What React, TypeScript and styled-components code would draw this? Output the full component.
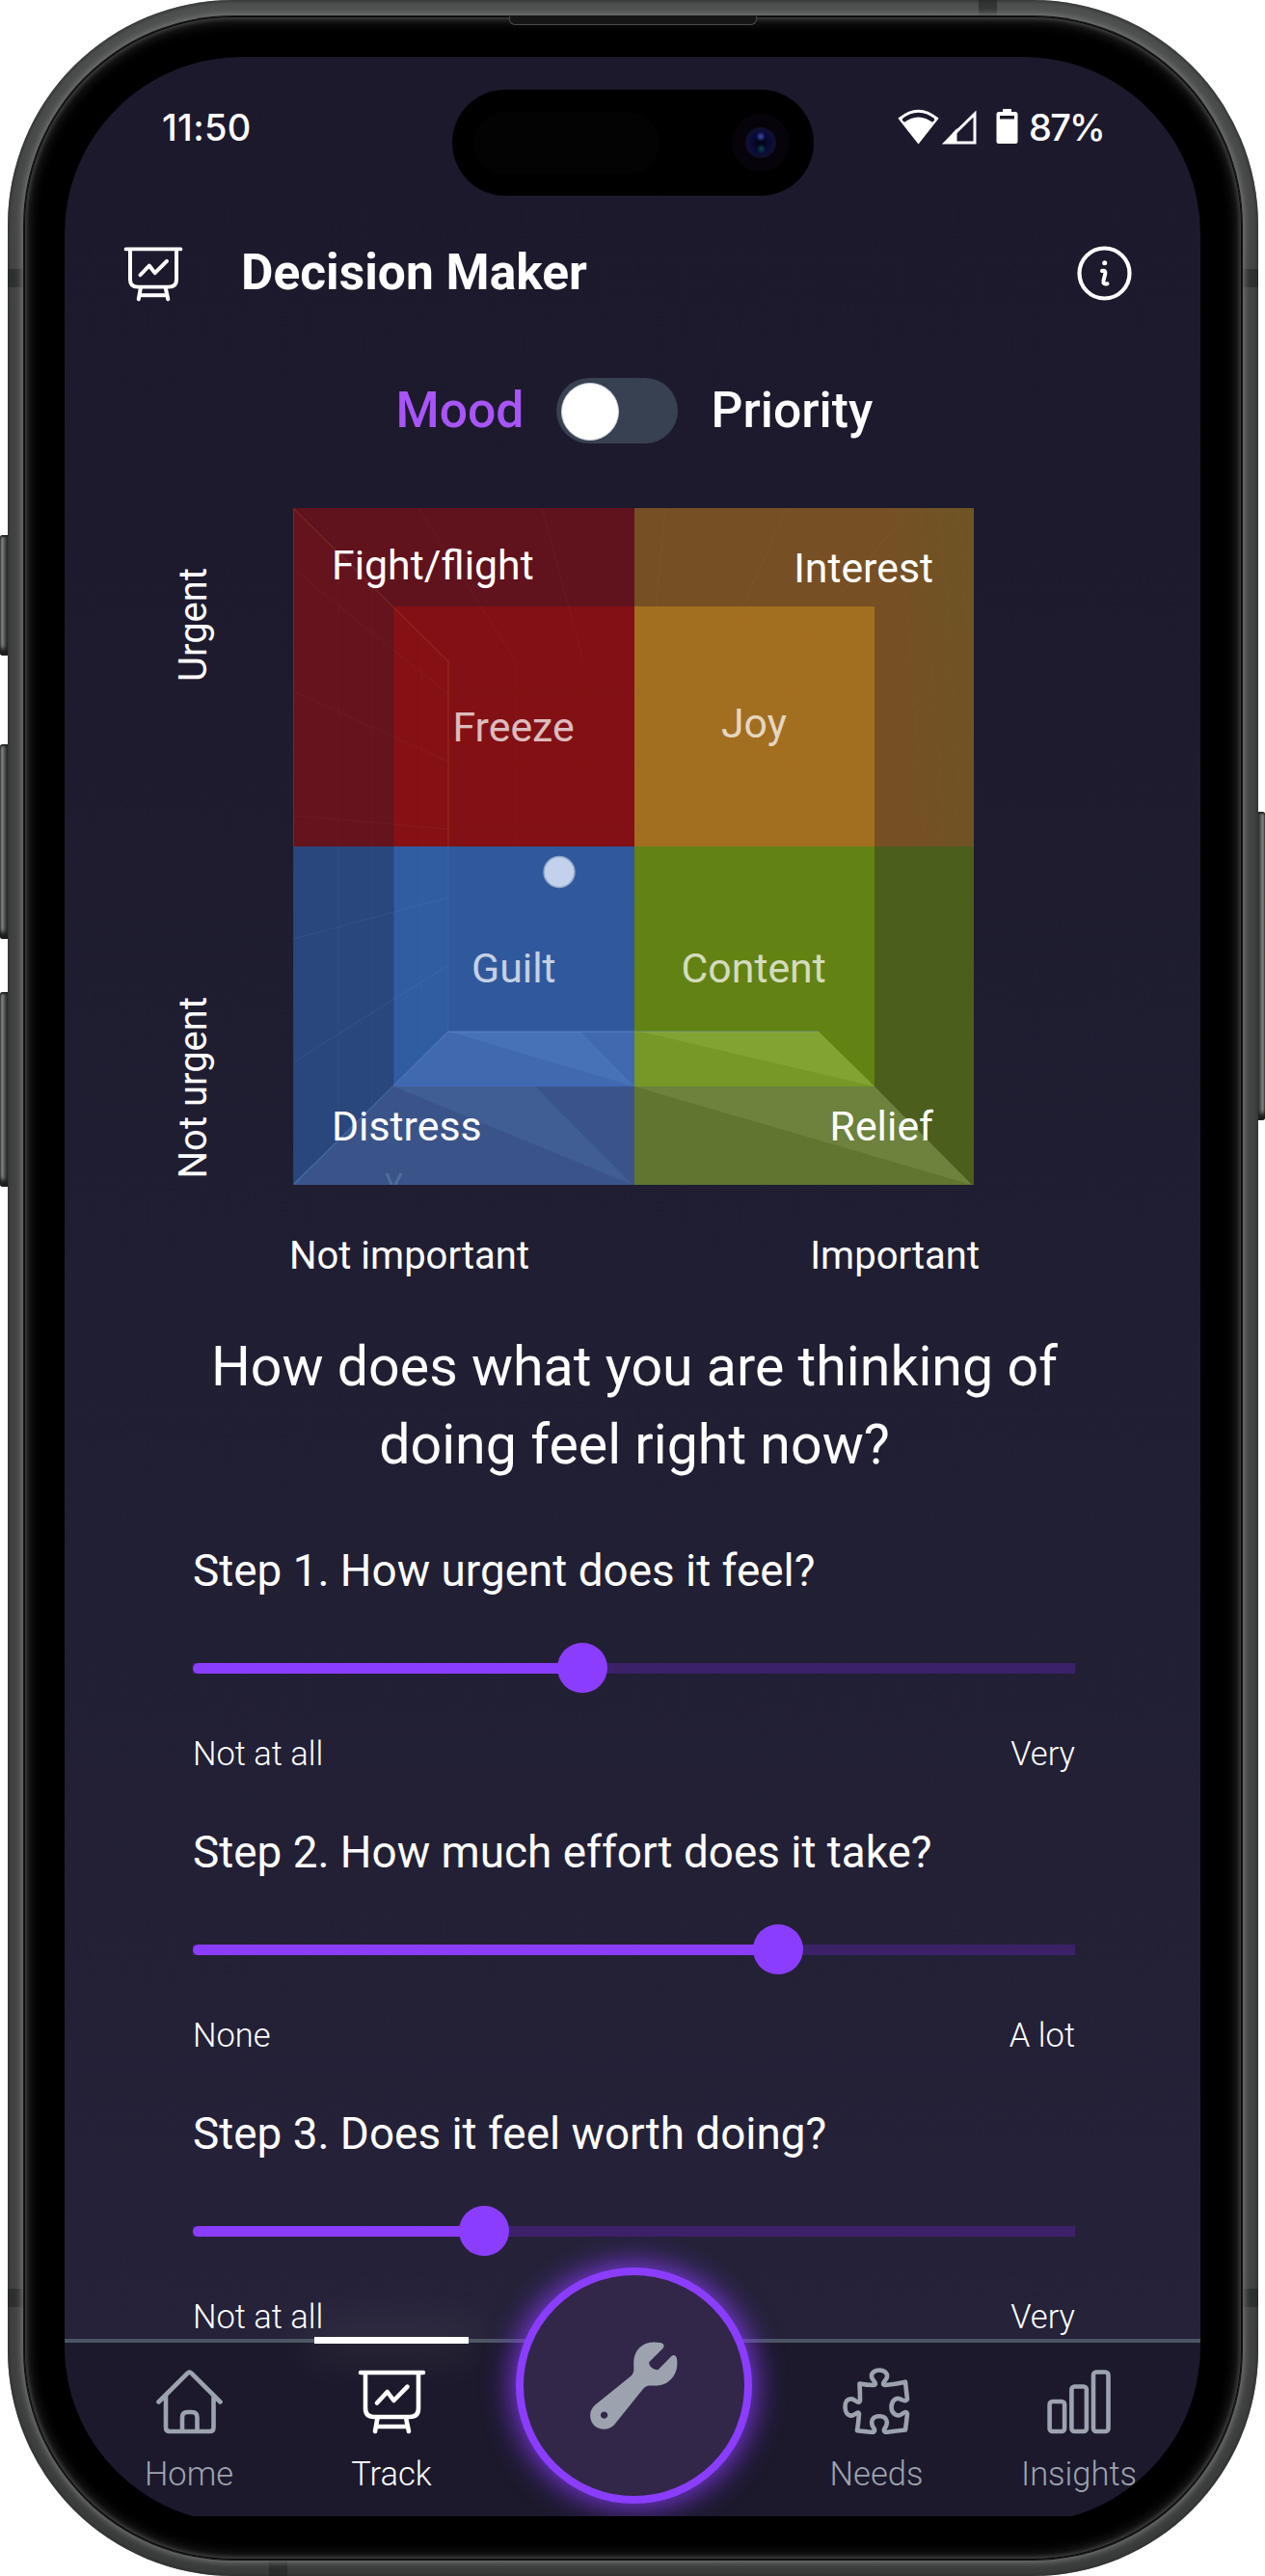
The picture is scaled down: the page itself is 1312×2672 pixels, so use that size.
import React from "react";
import styled, { createGlobalStyle, css } from "styled-components";

const Global = createGlobalStyle`
  * { box-sizing: border-box; }
  body { margin: 0; background: #fff; font-family: Roboto, "Liberation Sans", sans-serif; color: #fff; }
  svg { display: block; }
`;

/* ---------- device shell ---------- */

const Stage = styled.div`
  position: relative;
  width: 1312px;
  height: 2672px;
  padding: 0 7px 0 8px;
  overflow: hidden;
`;

const SideButton = styled.i<{ $side: "left" | "right"; $top: number; $height: number }>`
  position: absolute;
  ${(p) => p.$side}: 0;
  top: ${(p) => p.$top}px;
  width: 10px;
  height: ${(p) => p.$height}px;
  border-radius: 3px;
  background: linear-gradient(to ${(p) => p.$side}, #2b2c2c 30%, #58595a 55%, #858688 80%, #3a3b3b);
  box-shadow: inset 0 3px 2px -1px #222, inset 0 -9px 4px -2px #1c1c1c;
`;

const Body = styled.div`
  position: relative;
  height: 2672px;
  padding: 17px;
  border-radius: 234px;
  background: linear-gradient(#4e514f, #424443 12%, #424443 88%, #3a3c3b);
  box-shadow: inset 0 0 4px 1px #2b2d2c;
`;

const Seam = styled.i<{ $x?: "left" | "right"; $y?: "top" | "bottom"; $at: number }>`
  position: absolute;
  background: rgba(30, 32, 31, 0.55);
  ${(p) =>
    p.$x
      ? css`${p.$x}: 0; top: ${p.$at}px; width: 16px; height: 19px;`
      : css`${p.$y}: 0; left: ${p.$at}px; width: 19px; height: 16px;`}
`;

const Bezel = styled.div`
  position: relative;
  height: 2638px;
  padding: 42px 43px 45px 42px;
  border-radius: 217px;
  background: #000;
  box-shadow: 0 0 0 1px #141414, 0 0 6px 3px #747675, inset 0 0 0 1px #090909, inset 0 0 4px 2px #4a4a4a,
    inset 0 0 14px 4px #2e2e2e;
`;

const Earpiece = styled.i`
  position: absolute;
  top: 0;
  left: 503px;
  width: 257px;
  height: 9px;
  background: #161616;
  border: 1px solid #4a4a4a;
  border-top: 0;
  border-radius: 0 0 6px 6px;
`;

const DisplayWindow = styled.div`
  height: 2551px;
  overflow: hidden;
  border-radius: 184px 184px 0 0;
`;

const Display = styled.div`
  position: relative;
  display: flex;
  flex-direction: column;
  height: 2558px;
  padding-bottom: 7px;
  overflow: hidden;
  border-radius: 0 0 184px 184px;
  background: linear-gradient(#1c192c 0%, #1d1a2d 18%, #201e32 50%, #252239 93%);
`;

/* ---------- status bar ---------- */

const StatusBar = styled.div`
  display: flex;
  justify-content: space-between;
  height: 146px;
  padding: 48px 100px 0 101px;
  font: 500 38px/50px Inter, Roboto, sans-serif;
  letter-spacing: 0.3px;
`;

const StatusIcons = styled.div`
  display: flex;
  align-items: flex-start;
`;

const BatteryText = styled.span`
  letter-spacing: -1.8px;
  margin-left: 11px;
`;

const Island = styled.div`
  position: absolute;
  top: 34px;
  left: 402px;
  display: flex;
  align-items: center;
  justify-content: space-between;
  width: 375px;
  height: 110px;
  padding: 0 25px 0 22px;
  border-radius: 55px;
  background: #000;
`;

const Sensor = styled.div`
  width: 193px;
  height: 65px;
  border-radius: 33px;
  background: #030303;
`;

const Lens = styled.div`
  display: grid;
  place-items: center;
  width: 60px;
  height: 60px;
  border-radius: 50%;
  background: #06040a;
  &::after {
    content: "";
    width: 32px;
    height: 32px;
    border-radius: 50%;
    background: radial-gradient(circle at 50% 30%, #34409a 0 1px, transparent 5px),
      radial-gradient(circle at 52% 70%, #0b3a45 0 1px, transparent 5px),
      radial-gradient(circle, #05051c 20%, #0a0a3a 45%, #0f1030 60%, #0c0c22 100%);
  }
`;

/* ---------- header and switch ---------- */

const Header = styled.header`
  display: flex;
  align-items: center;
  height: 157px;
  padding: 0 71px 0 61px;
`;

const Title = styled.h1`
  flex: 1;
  margin: 0 0 2px 60px;
  font-size: 51.5px;
  font-weight: 700;
  line-height: 60px;
`;

const ModeRow = styled.div`
  display: flex;
  align-items: center;
  height: 128px;
  padding-left: 343.5px;
`;

const Mode = styled.span<{ $active?: boolean }>`
  font-size: 51.7px;
  font-weight: 500;
  line-height: 60px;
  color: ${(p) => (p.$active ? "#a855f7" : "#fff")};
`;

const Switch = styled.div`
  width: 126px;
  height: 68px;
  margin: 0 34px 0 34px;
  padding: 5px;
  border-radius: 34px;
  background: #374151;
  &::after {
    content: "";
    display: block;
    width: 58px;
    height: 58px;
    border-radius: 50%;
    background: #fff;
    border: 1px solid #cbd0d8;
  }
`;

/* ---------- matrix ---------- */

const Main = styled.main`
  flex: 1;
  min-height: 0;
  overflow: hidden;
  padding-top: 37px;
`;

const Chart = styled.div`
  display: grid;
  grid-template-columns: 127px 706px;
  margin-left: 110px;
`;

const AxisY = styled.div`
  display: flex;
  flex-direction: column;
  justify-content: space-between;
  height: 702px;
  padding: 62px 0 7px;
  font-size: 40px;
  line-height: 48px;
  span {
    writing-mode: vertical-rl;
    transform: rotate(180deg);
    width: 48px;
  }
`;

const AxisX = styled.div`
  display: flex;
  justify-content: space-between;
  width: 716px;
  margin: 50px 0 0 233px;
  font-size: 40px;
  line-height: 48px;
`;

const Matrix = styled.div`
  position: relative;
  width: 706px;
  height: 702px;
`;

const Words = styled.div`
  position: absolute;
  inset: 0;
  display: grid;
  grid-template-columns: 354px 352px;
  grid-template-rows: 351px 351px;
`;

const Quadrant = styled.div<{ $top: number; $gap: number; $right?: boolean }>`
  display: flex;
  flex-direction: column;
  align-items: ${(p) => (p.$right ? "flex-end" : "flex-start")};
  gap: ${(p) => p.$gap}px;
  padding: ${(p) => p.$top}px 42px 0 40px;
  font-size: 42.8px;
  line-height: 50px;
`;

const Inner = styled.span<{ $x: number }>`
  align-self: flex-start;
  margin-left: ${(p) => p.$x - 40}px;
  opacity: 0.72;
`;

/* ---------- questions ---------- */

const Question = styled.h2`
  margin: 50px 0 0;
  padding-left: 4px;
  text-align: center;
  font-size: 57.3px;
  font-weight: 400;
  line-height: 81px;
`;

const Steps = styled.div`
  display: flex;
  flex-direction: column;
  gap: 54px;
  margin: 62px 130px 0 133px;
`;

const StepTitle = styled.h3`
  margin: 0;
  font-size: 45.85px;
  font-weight: 400;
  line-height: 56px;
`;

const Track = styled.div`
  display: flex;
  align-items: center;
  height: 52px;
  margin-top: 47px;
  margin-bottom: 43px;
  background: linear-gradient(#3b2268, #3b2268) center / 100% 11px no-repeat;
`;

const Fill = styled.div`
  height: 11px;
  border-radius: 6px 0 0 6px;
  background: #8b3dff;
`;

const Thumb = styled.div`
  flex: none;
  width: 52px;
  height: 52px;
  margin-left: -26px;
  border-radius: 50%;
  background: #8b3dff;
`;

const Ends = styled.div`
  display: flex;
  justify-content: space-between;
  font-size: 34.5px;
  font-weight: 300;
  line-height: 40px;
`;

/* ---------- bottom navigation ---------- */

const Nav = styled.nav`
  position: relative;
  display: grid;
  grid-template-columns: 210px 210px 293px 210px 210px;
  height: 184px;
  padding-left: 24px;
  border-top: 4px solid #4b5563;
  background: #1c192c;
`;

const Tab = styled.div<{ $active?: boolean }>`
  position: relative;
  display: flex;
  flex-direction: column;
  align-items: center;
  padding-top: 27px;
  font-size: 34.5px;
  font-weight: 300;
  line-height: 40px;
  color: ${(p) => (p.$active ? "#fff" : "#9ca3af")};
  svg { margin-bottom: 20.5px; }
  ${(p) =>
    p.$active &&
    css`
      &::before {
        content: "";
        position: absolute;
        top: -6px;
        left: 25px;
        width: 160px;
        height: 7px;
        background: #fff;
        box-shadow: 0 0 50px 8px rgba(255, 255, 255, 0.11);
      }
    `}
`;

const ToolButton = styled.div`
  position: relative;
  justify-self: center;
  display: grid;
  place-items: center;
  width: 245px;
  height: 245px;
  margin-top: -78px;
  border: 8px solid #8b3dff;
  border-radius: 50%;
  background: #322749;
  box-shadow: 0 0 32px 2px rgba(139, 61, 255, 0.95);
`;

const line = {
  fill: "none",
  stroke: "currentColor",
  strokeWidth: 4.6,
  strokeLinecap: "round" as const,
  strokeLinejoin: "round" as const,
};

const BoardIcon = ({ w = 71, h = 68 }: { w?: number; h?: number }) => (
  <svg width={w} height={h} viewBox="0 0 71 68" preserveAspectRatio="none" {...line}>
    <path d="M3 4H68M8 4V41q0 9 9 9H54q9 0 9-9V4M20.5 51L18 65M50 51L53 65M19.5 60H51.5" />
    <path d="M20 35.5L30.7 24L37.4 33L51.5 18.7" />
  </svg>
);

const HomeIcon = () => (
  <svg width="71" height="68" viewBox="0 0 71 68" {...line}>
    <path d="M3.5 34.5L33.5 4.7q2-2 4 0L67.5 34.5M11 28V61q0 4 4 4H56.5q4 0 4-4V28M28 64V50.5q0-5.500 5.500-5.500h4.500q5.500 0 5.500 5.500V64" />
  </svg>
);

const PuzzleIcon = () => (
  <svg width="74" height="71" viewBox="0 0 74 71" {...line} style={{ marginTop: -3 }}>
    <path d="M19.500 18.500Q27 20 34 20C38 19 34.500 16 32.500 13C30.500 8 34.500 4.500 40 4.500C45.500 4.500 49.500 8 47.500 13C45.500 16 42 19 46 20Q57 19 67 16.700Q68 26 69 34.500Q68 37.500 63.500 35.300C57 31 52.500 37 52.500 42.700C52.500 49 58 54 63.500 50Q68 46 69 50Q68 59 67 66.500Q56 67.500 46.500 69C42.500 67 46.500 65 47.500 61C49 55 45 52.300 40 52.300C35 52.300 31 55 32.500 61C33.500 65 37.500 67 33.500 69Q25 68 17 67.200Q18.500 58 19 49.500C18 47 16 50 12 51.500C7 52.300 4.500 48 4.500 42.700C4.500 37 7 33.500 12 34.500C16 36 19 40 20 36Q20 27 19.500 18.500Z" />
  </svg>
);

const BarsIcon = () => (
  <svg width="71" height="68" viewBox="0 0 71 68" {...line}>
    <rect x="4.600" y="34" width="15.500" height="31" rx="3" />
    <rect x="27.400" y="18.500" width="15.500" height="46.500" rx="3" />
    <rect x="50" y="3.500" width="15.500" height="61.500" rx="3" />
  </svg>
);

const InfoIcon = () => (
  <svg width="57" height="57" viewBox="0 0 57 57" {...line} strokeWidth={4.2}>
    <circle cx="28.500" cy="28.500" r="26" />
    <circle cx="28.700" cy="17.800" r="2.500" fill="currentColor" stroke="none" />
    <path d="M26 26q4-1 3.300 3l-1.800 7q-.8 4.500 4 3.300" strokeWidth="4" />
  </svg>
);

const WrenchIcon = () => (
  <svg width="93" height="93" viewBox="305 290 280 280" fill="#9ca3af" style={{ marginTop: -1 }}>
    <path
      fillRule="evenodd"
      d="M492 357L535 314Q544 303 531 297C515 293 500 294 492 296C462 303 445 326 444 358C444 375 448 388 436 400L324 490C302 508 305 540 322 556C340 571 368 570 384 552L474 440C484 428 495 430 512 430C555 430 581 395 580 360C580 350 579 345 577 340Q571 331 562 338L520 381C505 381 492 370 492 357ZM352 511a11 11 0 1 0 .1 0Z"
    />
  </svg>
);

const WifiIcon = () => (
  <svg width="43" height="38" viewBox="0 0 43 38" style={{ marginTop: 6 }}>
    <path d="M2.500 10Q21.500-5.500 40.500 10L21.500 34Z" fill="none" stroke="#fff" strokeWidth="3" />
    <path d="M6 14.500Q21.500 2.500 37 14.500L21.500 36Z" fill="#fff" />
    <path d="M5.500 12.500Q21.500 0 37.500 12.500" fill="none" stroke="#1c192c" strokeWidth="2.600" />
  </svg>
);

const SignalIcon = () => (
  <svg width="38" height="38" viewBox="0 0 38 38" style={{ margin: "6px 0 0 2px" }}>
    <path d="M4.500 35H35V5Z" fill="none" stroke="#fff" strokeWidth="3" />
    <path d="M2 36H16.500V20Z" fill="#fff" />
  </svg>
);

const BatteryIcon = () => (
  <svg width="23" height="38" viewBox="0 0 23 38" style={{ margin: "5px 0 0 19px" }}>
    <path d="M7 4V1H16V4H20Q22.500 4 22.500 6.500V34.500Q22.500 37 20 37H3Q.5 37 .5 34.500V6.500Q.5 4 3 4Z" fill="#fff" />
    <path d="M4 8H19V11.500H4Z" fill="#1c192c" />
  </svg>
);

/* Two nested squares split into quadrants, with the room-like floor and its facets. */
const MatrixDrawing = () => (
  <svg width="706" height="702" viewBox="304 527 706 702">
    <defs>
      <linearGradient id="amberEdge" x1="0" y1=".55" x2="1" y2=".3">
        <stop offset=".25" stopColor="#6e5425" stopOpacity="0" />
        <stop offset="1" stopColor="#6e5425" />
      </linearGradient>
    </defs>
    <path d="M304 527H658V878H304Z" fill="#60121d" />
    <path d="M658 527H1010V878H658Z" fill="#765024" />
    <path d="M907 527H1010V878H907Z" fill="url(#amberEdge)" />
    <path d="M304 878H658V1229H304Z" fill="#29477c" />
    <path d="M658 878H1010V1229H658Z" fill="#4b5e1c" />
    <path d="M408.500 629H658V878H408.500Z" fill="#831014" />
    <path d="M658 629H907V878H658Z" fill="#a26e1f" />
    <path d="M408.500 878H658V1127H408.500Z" fill="#30589c" />
    <path d="M658 878H907V1127H658Z" fill="#638214" />
    <path d="M304 527L465 686V878H304Z" fill="#ff4020" opacity=".03" />
    <path d="M408.500 878H465V1070L408.500 1127Z" fill="#3068b0" opacity=".35" />
    <path d="M408.500 1127L465 1070H658V1127Z" fill="#4069b0" />
    <path d="M658 1070H849L907 1127H658Z" fill="#779726" />
    <path d="M408.500 1127H658V1229H304Z" fill="#3a548a" />
    <path d="M658 1127H907L1008 1229H658Z" fill="#60752f" />
    <path d="M465 1070H602L658 1127Z" fill="#4872b8" />
    <path d="M664 1070H849L907 1127Z" fill="#82a332" />
    <path d="M408.500 1127H555L656 1229Z" fill="#415e94" />
    <path d="M658 1127H907L1008 1229Z" fill="#6c823d" />
    <g stroke="#c08040" strokeOpacity=".06" fill="none" strokeWidth="1.500">
      <path d="M304 527L465 686V878" strokeOpacity=".18" />
      <path d="M434 527L535 686M562 527L605 686M690 527L675 686M816 527L745 686M944 527L815 686" />
      <path d="M304 590L465 720M304 717L465 790M304 846L465 860" />
      <path d="M351 573V878M386 610V878M437 660V878" strokeOpacity=".04" />
      <path d="M535 686V878M605 686V878M675 686V878M745 686V878M815 686V878M465 720H850M465 790H850M465 860H850" strokeOpacity=".03" />
    </g>
    <g stroke="#7da7dc" strokeOpacity=".08" fill="none" strokeWidth="1.500">
      <path d="M304 974L465 931M304 1102L465 1001M465 878V1070" />
      <path d="M465 931H658M465 1001H658M351 878V1180M386 878V1145M437 878V1098" strokeOpacity=".04" />
      <path d="M465 1070H849M304 1229L465 1070" strokeOpacity=".3" />
    </g>
    <path d="M304.500 527V1229" stroke="#3d3d50" />
    <path d="M401 1217L408 1233L416 1217" stroke="#4f6c9c" strokeWidth="3" fill="none" />
    <circle cx="580" cy="904.500" r="16" fill="#c3d1ec" stroke="#8fa3c6" strokeWidth="1.500" />
  </svg>
);

const steps = [
  { title: "Step 1. How urgent does it feel?", low: "Not at all", high: "Very", at: 403.5 },
  { title: "Step 2. How much effort does it take?", low: "None", high: "A lot", at: 607 },
  { title: "Step 3. Does it feel worth doing?", low: "Not at all", high: "Very", at: 302 },
];

export default function App() {
  return (
    <>
      <Global />
      <Stage>
        <SideButton $side="left" $top={555} $height={125} />
        <SideButton $side="left" $top={772} $height={202} />
        <SideButton $side="left" $top={1029} $height={202} />
        <SideButton $side="right" $top={842} $height={320} />
        <Body>
          <Seam $x="left" $at={279} />
          <Seam $x="right" $at={279} />
          <Seam $x="left" $at={2374} />
          <Seam $x="right" $at={2374} />
          <Seam $y="top" $at={1007} />
          <Seam $y="bottom" $at={271} />
          <Bezel>
            <Earpiece />
            <DisplayWindow>
              <Display>
                <StatusBar>
                  <span>11:50</span>
                  <StatusIcons>
                    <WifiIcon />
                    <SignalIcon />
                    <BatteryIcon />
                    <BatteryText>87%</BatteryText>
                  </StatusIcons>
                </StatusBar>
                <Island>
                  <Sensor />
                  <Lens />
                </Island>
                <Header>
                  <BoardIcon w={62} h={58} />
                  <Title>Decision Maker</Title>
                  <InfoIcon />
                </Header>
                <ModeRow>
                  <Mode $active>Mood</Mode>
                  <Switch />
                  <Mode>Priority</Mode>
                </ModeRow>
                <Main>
                  <Chart>
                    <AxisY>
                      <span>Urgent</span>
                      <span>Not urgent</span>
                    </AxisY>
                    <Matrix>
                      <MatrixDrawing />
                      <Words>
                        <Quadrant $top={34} $gap={118}>
                          <span>Fight/flight</span>
                          <Inner $x={165.5}>Freeze</Inner>
                        </Quadrant>
                        <Quadrant $top={37} $gap={111} $right>
                          <span>Interest</span>
                          <Inner $x={90}>Joy</Inner>
                        </Quadrant>
                        <Quadrant $top={101} $gap={114}>
                          <Inner $x={185}>Guilt</Inner>
                          <span>Distress</span>
                        </Quadrant>
                        <Quadrant $top={101} $gap={114} $right>
                          <Inner $x={48.5}>Content</Inner>
                          <span>Relief</span>
                        </Quadrant>
                      </Words>
                    </Matrix>
                  </Chart>
                  <AxisX>
                    <span>Not important</span>
                    <span>Important</span>
                  </AxisX>
                  <Question>
                    How does what you are thinking of
                    <br />
                    doing feel right now?
                  </Question>
                  <Steps>
                    {steps.map((s) => (
                      <section key={s.title}>
                        <StepTitle>{s.title}</StepTitle>
                        <Track>
                          <Fill style={{ width: s.at }} />
                          <Thumb />
                        </Track>
                        <Ends>
                          <span>{s.low}</span>
                          <span>{s.high}</span>
                        </Ends>
                      </section>
                    ))}
                  </Steps>
                </Main>
                <Nav>
                  <Tab>
                    <HomeIcon />
                    Home
                  </Tab>
                  <Tab $active>
                    <BoardIcon />
                    Track
                  </Tab>
                  <ToolButton>
                    <WrenchIcon />
                  </ToolButton>
                  <Tab>
                    <PuzzleIcon />
                    Needs
                  </Tab>
                  <Tab>
                    <BarsIcon />
                    Insights
                  </Tab>
                </Nav>
              </Display>
            </DisplayWindow>
          </Bezel>
        </Body>
      </Stage>
    </>
  );
}
